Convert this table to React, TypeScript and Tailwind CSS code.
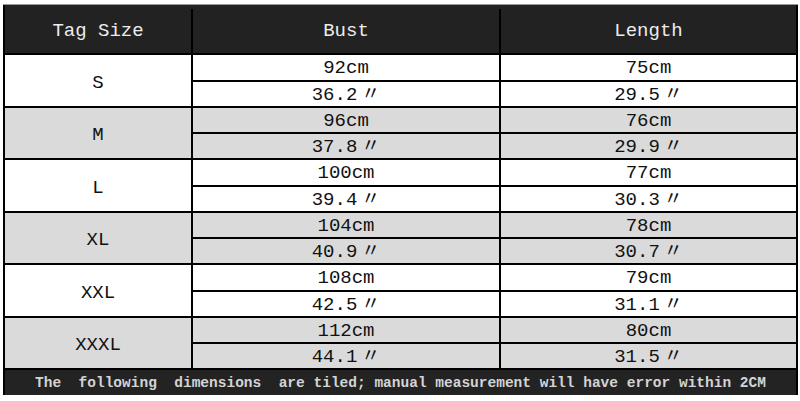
import React from 'react';

type Size = {
  tag: string;
  bustCm: string;
  bustIn: string;
  lenCm: string;
  lenIn: string;
  shaded: boolean;
  h: string;
};

const sizes: Size[] = [
  { tag: 'S', bustCm: '92cm', bustIn: '36.2', lenCm: '75cm', lenIn: '29.5', shaded: false, h: 'h-[53px]' },
  { tag: 'M', bustCm: '96cm', bustIn: '37.8', lenCm: '76cm', lenIn: '29.9', shaded: true, h: 'h-[52px]' },
  { tag: 'L', bustCm: '100cm', bustIn: '39.4', lenCm: '77cm', lenIn: '30.3', shaded: false, h: 'h-[53px]' },
  { tag: 'XL', bustCm: '104cm', bustIn: '40.9', lenCm: '78cm', lenIn: '30.7', shaded: true, h: 'h-[52px]' },
  { tag: 'XXL', bustCm: '108cm', bustIn: '42.5', lenCm: '79cm', lenIn: '31.1', shaded: false, h: 'h-[53px]' },
  { tag: 'XXXL', bustCm: '112cm', bustIn: '44.1', lenCm: '80cm', lenIn: '31.5', shaded: true, h: 'h-[52px]' },
];

// 〃 = inches, a little gap like the original
function Inches({ v }: { v: string }) {
  return (
    <span>
      {v}
      <span className="ml-[4px]">〃</span>
    </span>
  );
}

function ValueCell({ top, bottom, last }: { top: string; bottom: string; last?: boolean }) {
  return (
    <div className={`flex flex-col ${last ? 'flex-1' : 'w-[308px] border-r-2 border-black'}`}>
      <div className="flex flex-1 items-center justify-center pt-[3px] border-b-2 border-black leading-none">{top}</div>
      <div className="flex flex-1 items-center justify-center pt-[3px] leading-none">
        <Inches v={bottom} />
      </div>
    </div>
  );
}

export default function App() {
  return (
    <div
      className="w-[800px] h-[401px] bg-white overflow-hidden pt-[4px] pl-[3px]"
      style={{ fontFamily: '"Liberation Mono", "Noto Sans CJK SC", monospace' }}
    >
      <div className="w-[795px] border-t border-[#9a9a9a]">
        {/* header */}
        <div className="flex h-[50px] pt-[4px] bg-[#222222] text-[#ececec] text-[19px] border-x-2 border-b-2 border-black">
          <div className="w-[188px] flex items-center justify-center border-r-2 border-black">Tag Size</div>
          <div className="w-[308px] flex items-center justify-center border-r-2 border-black">Bust</div>
          <div className="flex-1 flex items-center justify-center">Length</div>
        </div>

        {sizes.map((s) => (
          <div
            key={s.tag}
            className={`flex ${s.h} border-x-2 border-b-2 border-black text-[19px] text-[#111] ${
              s.shaded ? 'bg-[#dadada]' : 'bg-white'
            }`}
          >
            <div className="w-[188px] flex items-center justify-center pt-[5px] border-r-2 border-black">{s.tag}</div>
            <ValueCell top={s.bustCm} bottom={s.bustIn} />
            <ValueCell top={s.lenCm} bottom={s.lenIn} last />
          </div>
        ))}

        {/* footer note */}
        <div className="flex h-[25px] pt-[3px] items-center justify-center bg-[#232323] border-x-2 border-black text-[#d4d4d4] text-[14.5px] font-bold whitespace-pre">
          {'The  following  dimensions  are tiled; manual measurement will have error within 2CM'}
        </div>
      </div>
    </div>
  );
}
